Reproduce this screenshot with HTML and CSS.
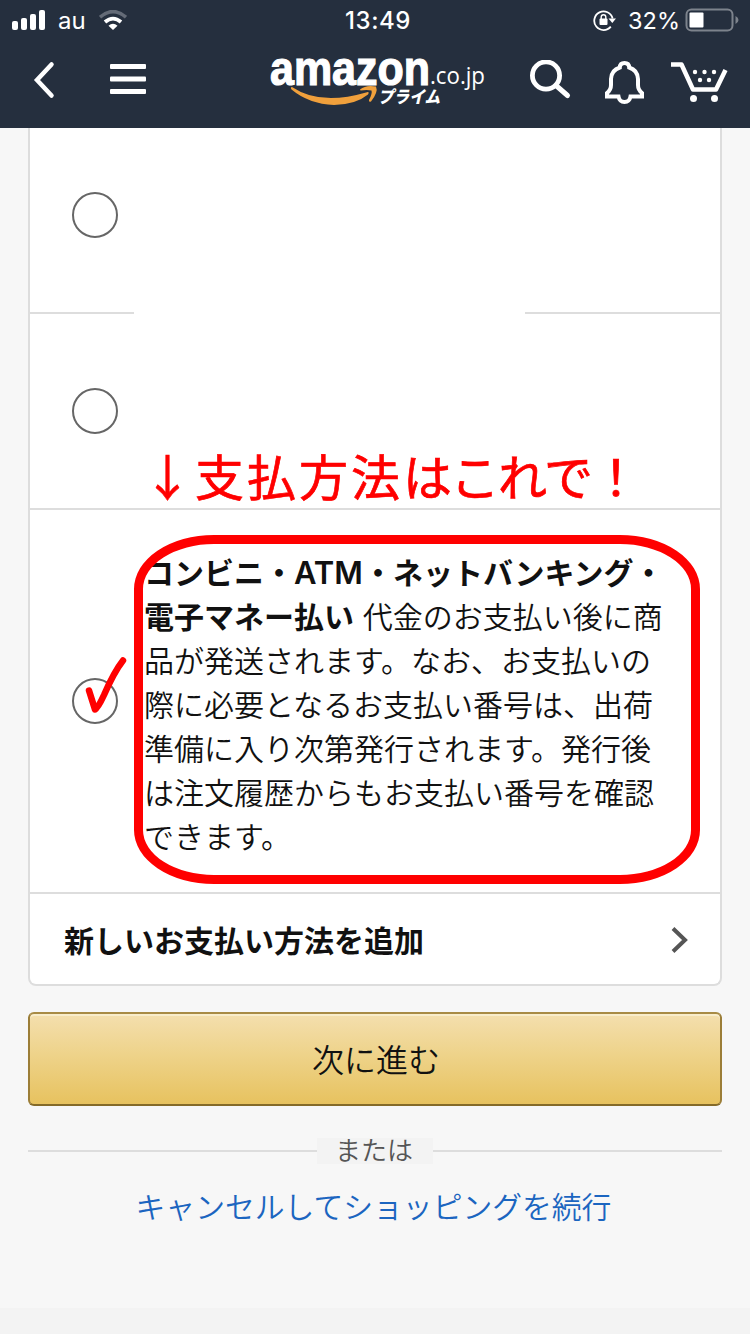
FILE: index.html
```html
<!DOCTYPE html>
<html lang="ja">
<head>
  <meta charset="UTF-8">
  <meta name="viewport" content="width=device-width, initial-scale=1.0">
  <title>お支払い方法</title>
  <link rel="stylesheet" href="styles.css">
</head>
<body>
  <!-- Header -->
  <header>
    <div class="status-bar">
      <div class="status-left">
        <svg width="34" height="20" viewBox="0 0 34 20" fill="#fff">
          <rect x="0" y="11" width="6" height="9" rx="2"/>
          <rect x="9" y="8" width="6" height="12" rx="2"/>
          <rect x="18" y="4" width="6" height="16" rx="2"/>
          <rect x="27" y="0" width="6" height="20" rx="2"/>
        </svg>
        <span class="carrier">au</span>
        <svg width="28" height="20" viewBox="0 0 28 20" fill="none" stroke="#fff">
          <path d="M1 7.200 Q14 -4 27 7.200" stroke="#646b77" stroke-width="3.600"/>
          <path d="M6 12 Q14 5.200 22 12" stroke-width="3.800"/>
          <path d="M9.500 15.800 Q14 11.500 18.500 15.800 L14 20 Z" fill="#fff" stroke="none"/>
        </svg>
      </div>
      <span class="clock">13:49</span>
      <div class="status-right">
        <svg width="24" height="22" viewBox="0 0 24 22" fill="none" stroke="#fff" stroke-width="1.800">
          <path d="M17.800 17.600 A9.300 9.300 0 1 1 19.600 9.500"/>
          <path d="M15.500 9.500 H23 L19.300 14 Z" fill="#fff" stroke="none"/>
          <rect x="6.500" y="9.500" width="8" height="6.500" rx="1" fill="#fff" stroke="none"/>
          <path d="M8.200 10 V8 A2.300 2.300 0 0 1 12.800 8 V10" stroke-width="1.400"/>
        </svg>
        <span class="percent">32%</span>
        <svg width="54" height="24" viewBox="0 0 54 24">
          <rect x="1.500" y="1.500" width="46" height="21" rx="5" fill="none" stroke="#7d838c" stroke-width="2"/>
          <rect x="4.500" y="4.500" width="14" height="15" rx="1" fill="#fff"/>
          <path d="M50.500 8 Q53.500 9.500 53.500 12 Q53.500 14.500 50.500 16 Z" fill="#7d838c"/>
        </svg>
      </div>
    </div>
    <nav>
      <svg class="back" width="24" height="40" viewBox="0 0 24 40" fill="none" stroke="#fff" stroke-width="4.500" stroke-linecap="round">
        <path d="M19.500 4.500 L5 20 L19.500 35.500"/>
      </svg>
      <svg class="menu" width="36" height="30" viewBox="0 0 36 30" fill="#fff">
        <rect width="36" height="5" rx="1"/>
        <rect y="12.500" width="36" height="5" rx="1"/>
        <rect y="25" width="36" height="5" rx="1"/>
      </svg>
      <svg class="logo" width="220" height="60" viewBox="0 0 220 60">
        <text class="logo-name" x="0" y="34.500" textLength="160" lengthAdjust="spacingAndGlyphs">amazon</text>
        <text class="logo-domain" x="160" y="34" textLength="55" lengthAdjust="spacingAndGlyphs">.co.jp</text>
        <path fill="#f0a03c" d="M22 37 Q50 56 96 42.500 Q100 41 98 44.500 Q86 54.500 64 55 Q39 54 21.500 39.500 Q20 37 22 37 Z"/>
        <path fill="#f0a03c" d="M90 39.500 Q96 34.500 106 36.500 Q108.500 42 101 51.500 Q98.500 52.500 99 50 Q102.500 43.500 101.500 40.500 Q97 39.500 90.500 40.500 Z"/>
        <text class="logo-prime" x="108" y="53" textLength="62" lengthAdjust="spacingAndGlyphs">プライム</text>
      </svg>
      <svg class="search" width="42" height="42" viewBox="0 0 42 42" fill="none" stroke="#fff">
        <circle cx="16" cy="15.500" r="13.600" stroke-width="4.800"/>
        <path d="M26 25.500 L37.500 35.500" stroke-width="5" stroke-linecap="round"/>
      </svg>
      <svg class="bell" width="40" height="44" viewBox="0 0 40 44" fill="none" stroke="#fff" stroke-width="4">
        <path d="M2 35.500 V32 Q6 29 6 24 V18 Q6.500 9 14.800 6.500 Q15 2 19.500 2 Q24 2 24.200 6.500 Q32.500 9 33 18 V24 Q33 29 37 32 V35.500 H25.500 Q24.500 41 19.500 41 Q14.500 41 13.500 35.500 Z"/>
      </svg>
      <svg class="cart" width="58" height="42" viewBox="0 0 58 42" fill="#fff">
        <path d="M0 3.500 H10.500 L22 28.500 H45 L54.500 9" fill="none" stroke="#fff" stroke-width="4.500" stroke-linejoin="round"/>
        <circle cx="22.500" cy="37.500" r="3.500"/>
        <circle cx="43.500" cy="37.500" r="3.500"/>
        <circle cx="24" cy="11" r="2.200"/>
        <circle cx="33.500" cy="11" r="2.200"/>
        <circle cx="43" cy="11" r="2.200"/>
        <circle cx="29" cy="19" r="2.200"/>
        <circle cx="38" cy="19" r="2.200"/>
      </svg>
    </nav>
  </header>

  <!-- Payment methods -->
  <main>
    <section class="card">
      <div class="option first">
        <span class="radio"></span>
      </div>
      <div class="option second">
        <span class="radio"></span>
        <p class="note">↓支払方法<span class="kana">はこれで！</span></p>
      </div>
      <div class="option selected">
        <span class="radio"></span>
        <p class="description"><b>コンビニ・<span class="latin">ATM</span>・ネットバンキング・<br>電子マネー払い</b> 代金のお支払い後に商<br>品が発送されます。なお、お支払いの<br>際に必要となるお支払い番号は、出荷<br>準備に入り次第発行されます。発行後<br>は注文履歴からもお支払い番号を確認<br>できます。</p>
        <span class="highlight"></span>
        <svg class="check" width="50" height="64" viewBox="0 0 50 64" fill="none" stroke="#f00" stroke-width="6.500" stroke-linecap="round" stroke-linejoin="round">
          <path d="M8 36.500 L14 55.500 Q17 54 23 41 Q33 18 42 6.500"/>
        </svg>
      </div>
      <a class="add-method" href="#">
        <span>新しいお支払い方法を追加</span>
        <svg width="18" height="28" viewBox="0 0 18 28" fill="none" stroke="#555" stroke-width="4">
          <path d="M2 2.500 L14 14 L2 25.500"/>
        </svg>
      </a>
    </section>

    <button class="continue">次に進む</button>

    <div class="divider"><span>または</span></div>

    <a class="cancel" href="#">キャンセルしてショッピングを続行</a>
  </main>

  <footer></footer>
</body>
</html>
```
FILE: styles.css
```css
/* General Styles */
* {
  box-sizing: border-box;
}

body {
  font-family: "Noto Sans CJK JP", sans-serif;
  font-weight: 350;
  margin: 0;
  height: 1334px;
  display: flex;
  flex-direction: column;
  overflow: hidden;
  color: #111;
  background: #f7f7f7;
}

p {
  margin: 0;
}

a {
  text-decoration: none;
}

svg {
  display: block;
  flex: none;
}

/* Header */
header {
  height: 128px;
  flex: none;
  color: #fff;
  background: #252f3e;
}

.status-bar {
  height: 40px;
  padding: 0 11px 0 12px;
  display: grid;
  grid-template-columns: 1fr auto 1fr;
  align-items: center;
  font-family: Inter, sans-serif;
  font-size: 24px;
  font-weight: 400;
  line-height: 30px;
}

.status-left,
.status-right {
  display: flex;
  align-items: center;
}

.status-right {
  justify-content: flex-end;
}

.carrier {
  margin: 2px 13px 0 12px;
}

.clock {
  font-size: 24px;
  font-weight: 500;
  letter-spacing: 0.6px;
  padding: 2px 0 0 5px;
}

.percent {
  font-size: 23.5px;
  margin: 2px 5px 0 11px;
}

nav {
  height: 88px;
  padding-left: 32px;
  display: flex;
  align-items: flex-start;
}

.back {
  margin-top: 20px;
}

.menu {
  margin: 24px 0 0 54px;
}

.logo {
  margin: 10px 0 0 124px;
  overflow: visible;
}

.logo text {
  fill: #fff;
}

.logo-name {
  font-family: "Liberation Sans", sans-serif;
  font-size: 48px;
  font-weight: 700;
  stroke: #fff;
  stroke-width: 1.2px;
}

.logo-domain {
  font-family: "Open Sans", sans-serif;
  font-size: 23px;
  font-weight: 400;
}

.logo-prime {
  font-family: "Noto Sans CJK JP", sans-serif;
  font-size: 17px;
  font-weight: 900;
  font-style: italic;
}

.search {
  margin: 20px 0 0 40px;
}

.bell {
  margin: 21px 0 0 33px;
}

.cart {
  margin: 21px 0 0 26px;
}

/* Payment card */
main {
  flex: 1;
  padding: 0 28px;
}

.card {
  background: #fff;
  border: 2px solid #ddd;
  border-top: none;
  border-radius: 0 0 8px 8px;
}

.option {
  position: relative;
  display: flex;
  align-items: center;
  padding-left: 42px;
  border-bottom: 2px solid #ddd;
}

.first {
  height: 186px;
  padding-bottom: 12px;
  border-bottom: none;
  background: linear-gradient(#ddd, #ddd) 0 100% / 104px 2px no-repeat,
    linear-gradient(#ddd, #ddd) 100% 100% / 195px 2px no-repeat;
}

.second {
  height: 196px;
}

.selected {
  height: 384px;
}

.radio {
  width: 46px;
  height: 46px;
  flex: none;
  border: 2px solid #666;
  border-radius: 50%;
}

.description {
  margin: 3px 0 0 26px;
  font-size: 30px;
  line-height: 44px;
  white-space: nowrap;
}

.description b {
  font-weight: 700;
  margin-right: 2px;
}

.latin {
  font-family: Inter, sans-serif;
  font-size: 31px;
  font-weight: 600;
  line-height: 1;
}

/* Marks drawn over the card */
.note {
  position: absolute;
  left: 113px;
  top: 131px;
  z-index: 2;
  font-size: 49px;
  font-weight: 400;
  line-height: 60px;
  letter-spacing: 3px;
  white-space: nowrap;
  color: #f00;
  -webkit-text-stroke: 0.7px #f00;
}

.kana {
  letter-spacing: -1.5px;
}

.highlight {
  position: absolute;
  left: 104px;
  top: 25px;
  width: 566px;
  height: 349px;
  border: 9px solid #f00;
  border-radius: 80px / 54px;
}

.check {
  position: absolute;
  left: 51px;
  top: 144px;
}

.add-method {
  height: 90px;
  padding: 0 31px 0 34px;
  display: flex;
  align-items: center;
  justify-content: space-between;
  font-size: 30px;
  font-weight: 700;
  color: #111;
}

.add-method svg {
  margin-top: 2px;
}

/* Buttons */
.continue {
  display: block;
  width: 100%;
  height: 94px;
  margin-top: 26px;
  padding: 0 0 3px 2px;
  font-family: inherit;
  font-size: 32px;
  font-weight: 350;
  color: #111;
  border: 2px solid;
  border-color: #a88b45 #9c7e38 #846a29;
  border-radius: 6px;
  background: linear-gradient(#f4dfae, #eed38a 45%, #e7c25f);
  box-shadow: inset 0 2px 0 #f9edcb;
}

.divider {
  height: 26px;
  margin-top: 32px;
  display: flex;
  align-items: center;
  font-size: 26px;
  line-height: 22px;
  color: #555;
}

.divider::before,
.divider::after {
  content: "";
  flex: 1;
  height: 2px;
  background: #ddd;
}

.divider span {
  width: 116px;
  height: 26px;
  padding-right: 2px;
  text-align: center;
  background: #f3f3f3;
}

.cancel {
  display: block;
  margin: 19px 3px 0 0;
  font-size: 29.8px;
  line-height: 44px;
  text-align: center;
  color: #1b65c0;
}

footer {
  height: 26px;
  flex: none;
  background: #f3f3f3;
}
```
